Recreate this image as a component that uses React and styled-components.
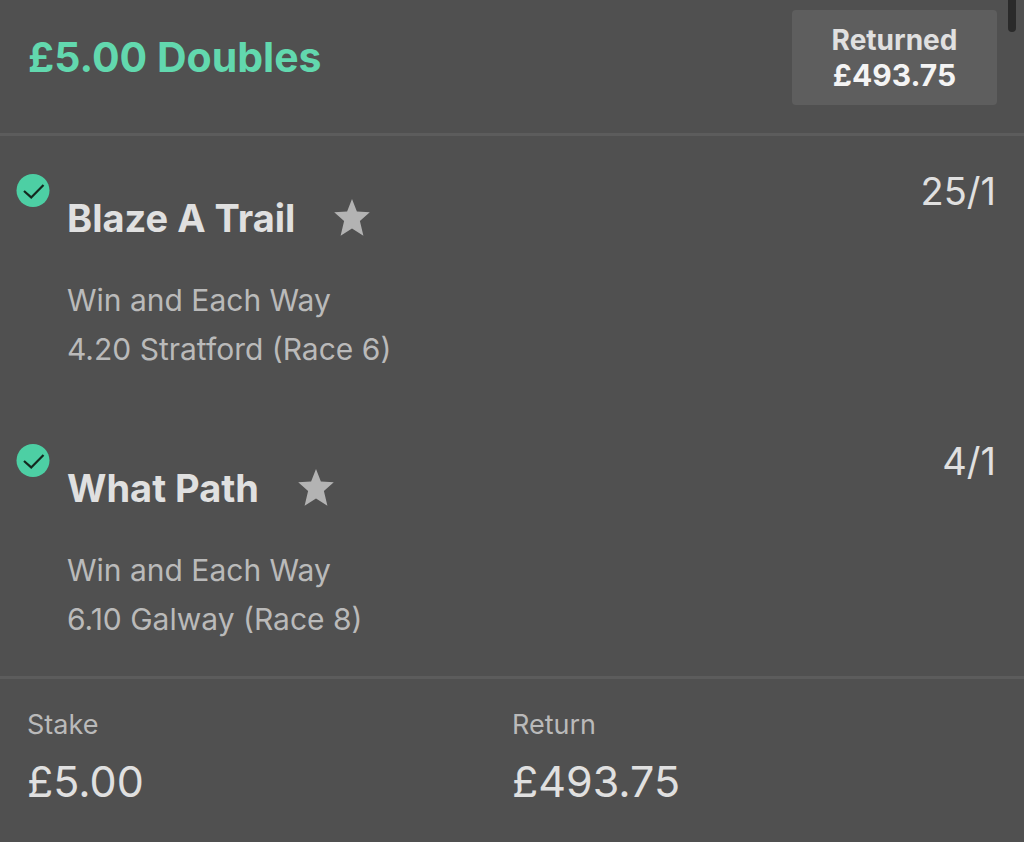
import React from 'react';
import styled, { createGlobalStyle } from 'styled-components';

const GlobalStyle = createGlobalStyle`
  * {
    box-sizing: border-box;
  }

  body {
    margin: 0;
    background-color: #505050;
    font-family: Inter, "Liberation Sans", sans-serif;
  }

  h1, h2, p, dl, dt, dd, ul {
    margin: 0;
    padding: 0;
  }
`;

const BetCard = styled.main`
  position: relative;
  min-height: 100vh;
  background-color: #505050;
  color: #e0e0e0;
`;

const ScrollThumb = styled.div`
  position: absolute;
  top: 0;
  right: 8px;
  width: 8px;
  height: 32px;
  border-radius: 0 0 4px 4px;
  background-color: #2a2a2a;
`;

const Header = styled.header`
  display: flex;
  justify-content: space-between;
  align-items: flex-start;
  padding: 10px 27px 28px 28px;
  border-bottom: 3px solid #5c5c5c;
`;

const Title = styled.h1`
  padding-top: 23px;
  color: #62d8ae;
  font-size: 41px;
  font-weight: 700;
  line-height: 48px;
`;

const Returned = styled.div`
  min-width: 205px;
  padding: 13px 16px 12px;
  border-radius: 4px;
  background-color: #5e5e5e;
  font-size: 28px;
  font-weight: 700;
  line-height: 35px;
  text-align: center;
`;

const ReturnedAmount = styled.p`
  color: #f4f4f4;
  font-size: 30px;
`;

const Selections = styled.ul`
  list-style: none;
`;

const Selection = styled.li`
  display: grid;
  grid-template-columns: 51px 1fr auto;
  min-height: 270px;
  padding: 38px 28px 0 16px;
`;

const Tick = styled.svg`
  width: 34px;
  height: 34px;
`;

const Name = styled.h2`
  display: flex;
  align-items: center;
  gap: 37px;
  margin-top: 20px;
  font-size: 38px;
  font-weight: 700;
  line-height: 48px;
`;

const Star = styled.svg`
  width: 40px;
  height: 40px;
`;

const Details = styled.div`
  margin-top: 34px;
  color: #bababa;
  font-size: 30px;
  line-height: 49px;
`;

const Odds = styled.p`
  font-size: 38px;
  line-height: 34px;
`;

const Totals = styled.dl`
  display: grid;
  grid-template-columns: 1fr 1fr;
  padding: 28px 27px;
  border-top: 3px solid #5c5c5c;
`;

const TotalLabel = styled.dt`
  color: #bababa;
  font-size: 27px;
  line-height: 36px;
`;

const TotalValue = styled.dd`
  margin-top: 8px;
  font-size: 43px;
  line-height: 60px;
`;

const selections = [
  { name: 'Blaze A Trail', race: '4.20 Stratford (Race 6)', odds: '25/1' },
  { name: 'What Path', race: '6.10 Galway (Race 8)', odds: '4/1' },
];

const TickIcon = () => (
  <Tick viewBox="0 0 34 34" role="img" aria-label="Won">
    <circle cx="17" cy="16.5" r="16.5" fill="#4dcfa4" />
    <path d="M8 17l7.2 6.4L27.5 11" fill="none" stroke="#14291f" strokeWidth="2.2" />
  </Tick>
);

const StarIcon = () => (
  <Star viewBox="0 0 40 40" aria-hidden="true">
    <path d="M20 1l4.9 12.6 12.9.6-9.9 8.8 3.5 14.8L20 30.6 8.6 37.8l3.5-14.8-9.9-8.8 12.9-.6z" fill="#b3b3b3" />
  </Star>
);

const App = () => {
  return (
    <BetCard>
      <GlobalStyle />
      <ScrollThumb />
      <Header>
        <Title>£5.00 Doubles</Title>
        <Returned>
          <p>Returned</p>
          <ReturnedAmount>£493.75</ReturnedAmount>
        </Returned>
      </Header>
      <Selections>
        {selections.map((item) => (
          <Selection key={item.name}>
            <TickIcon />
            <div>
              <Name>
                {item.name}
                <StarIcon />
              </Name>
              <Details>
                <p>Win and Each Way</p>
                <p>{item.race}</p>
              </Details>
            </div>
            <Odds>{item.odds}</Odds>
          </Selection>
        ))}
      </Selections>
      <Totals>
        <div>
          <TotalLabel>Stake</TotalLabel>
          <TotalValue>£5.00</TotalValue>
        </div>
        <div>
          <TotalLabel>Return</TotalLabel>
          <TotalValue>£493.75</TotalValue>
        </div>
      </Totals>
    </BetCard>
  );
};

export default App;
